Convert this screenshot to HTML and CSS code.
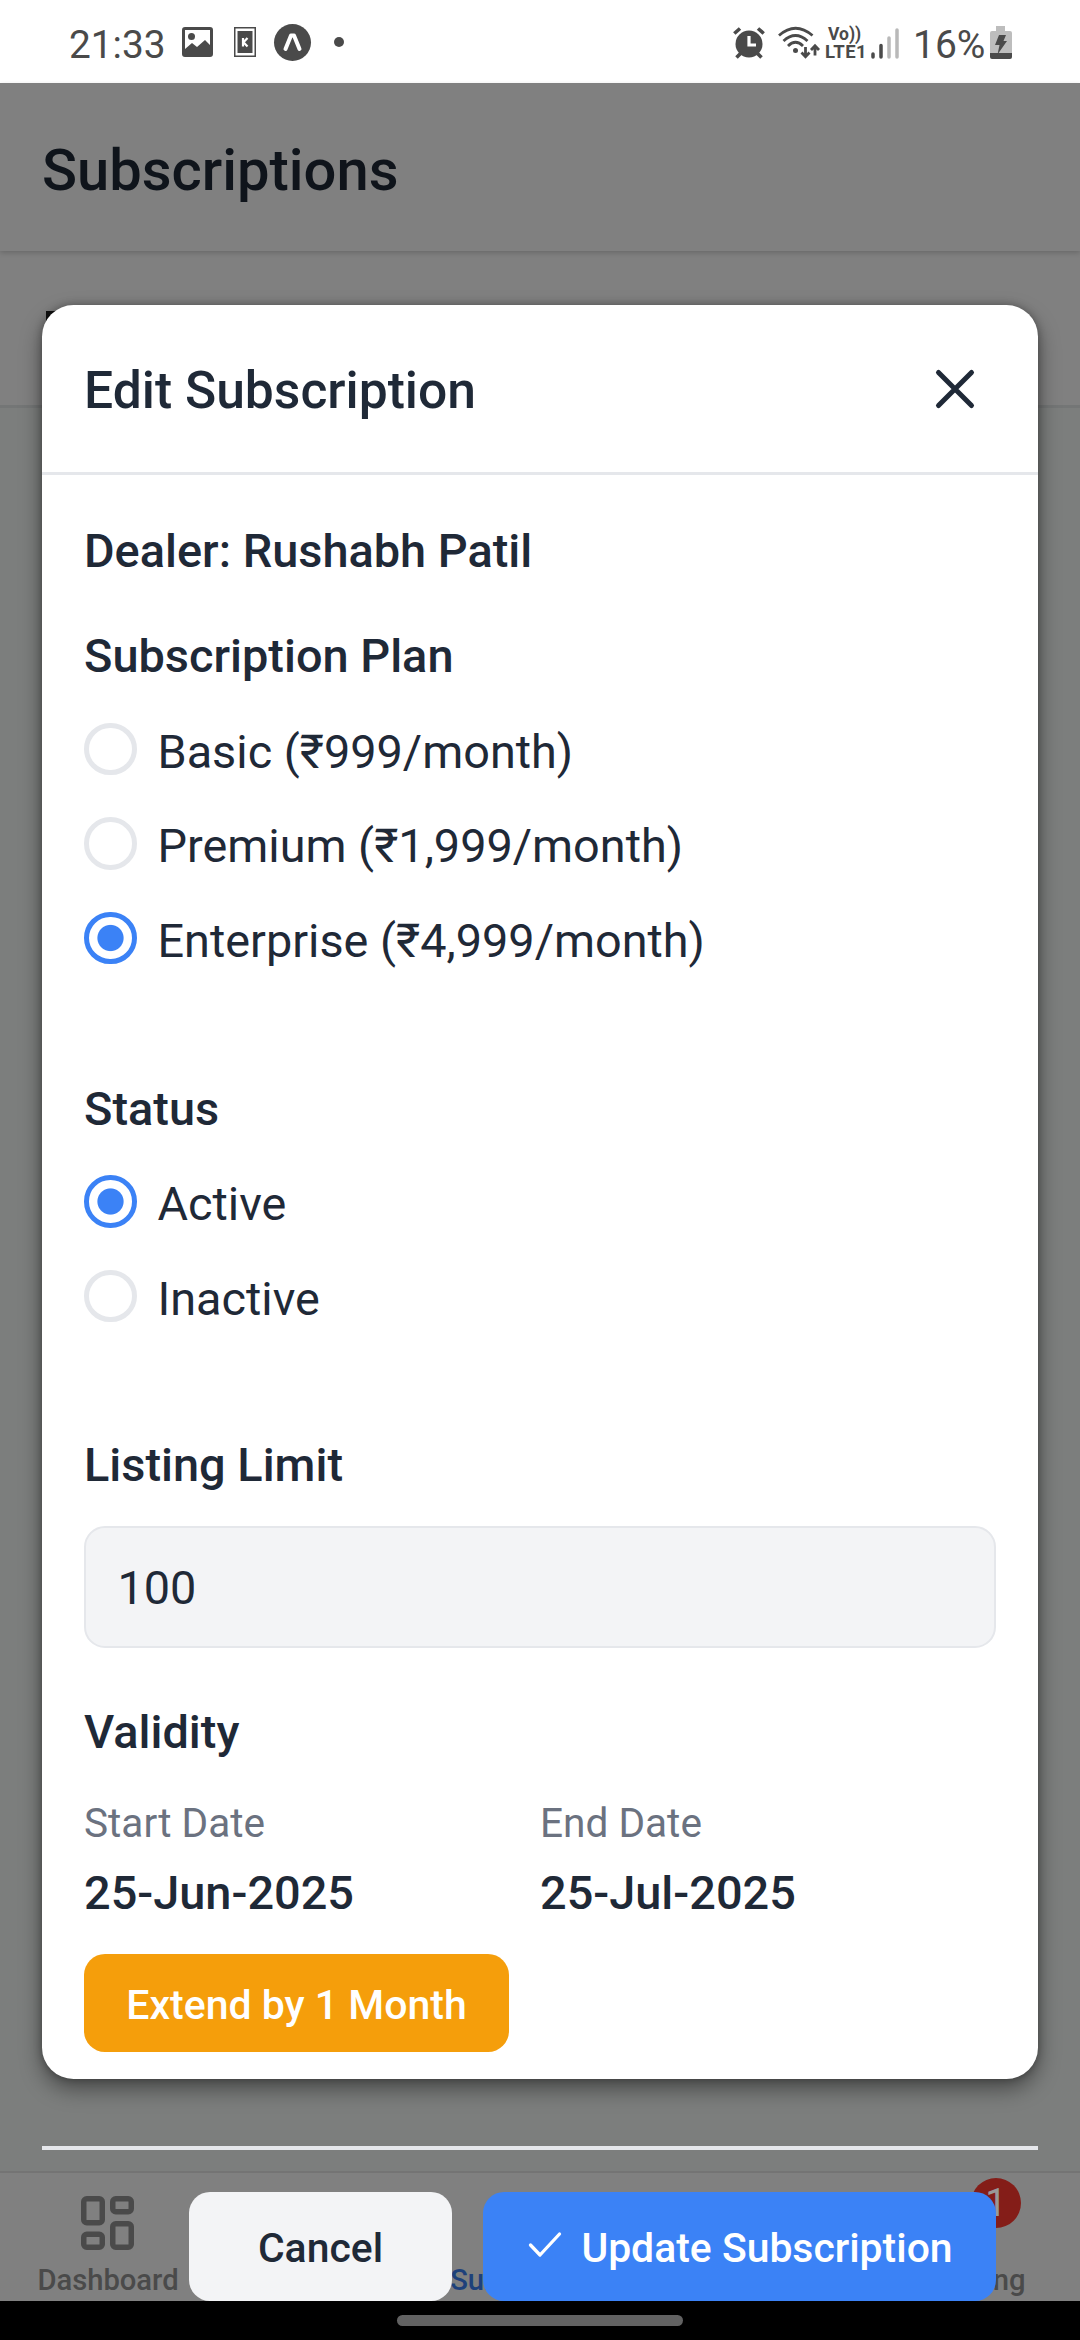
FILE: index.html
```html
<!DOCTYPE html>
<html lang="en">
<head>
<meta charset="utf-8">
<title>Subscriptions</title>
<link rel="stylesheet" href="styles.css">
</head>
<body>
<div class="screen">
  <header class="statusbar">
    <div class="status-left">
      <span class="clock">21:33</span>
      <svg class="ic-photo" viewBox="0 0 31 30"><path fill-rule="evenodd" d="M3 0h25a3 3 0 0 1 3 3v24a3 3 0 0 1-3 3H3a3 3 0 0 1-3-3V3a3 3 0 0 1 3-3zM3 3v19l7-6 5 4 8-7 5 5V3z"/><circle cx="9.500" cy="9.500" r="3.500"/></svg>
      <svg class="ic-card" viewBox="0 0 22 30"><path fill="none" stroke="#4a4a4a" stroke-width="1.500" d="M.75.75h20.500v28.500H.75z"/><path d="M3.500 4h15v22h-15z"/><path fill="none" stroke="#fff" stroke-width="2.200" d="M9 11v8.500M13.500 11l-4 4.300 4 4.200"/></svg>
      <svg class="ic-expo" viewBox="0 0 37 37"><circle cx="18.500" cy="18.500" r="18.500"/><path fill="none" stroke="#fff" stroke-width="4" stroke-linecap="round" stroke-linejoin="round" d="M11.500 25 17 11.500h3L25.500 25"/></svg>
      <span class="dot"></span>
    </div>
    <div class="status-right">
      <svg class="ic-alarm" viewBox="0 0 32 32"><circle cx="16" cy="17" r="13.500"/><path fill="none" stroke="#4a4a4a" stroke-width="3.600" d="M1.300 6.500 7 1.500M30.700 6.500 25 1.500M3.500 30.500l5-5M28.500 30.500l-5-5"/><path fill="none" stroke="#fff" stroke-width="3.200" d="M16 9v9h7"/></svg>
      <svg class="ic-wifi" viewBox="0 0 42 33"><g fill="none" stroke="#4a4a4a" stroke-width="2.800"><path d="M1 9.500Q17.500-5 34.500 9.500M5.500 15Q17.500 4 29.500 15M10 20Q17.500 12.500 25 20"/><path d="M27.500 21v9M23.500 26.500l4 4.200 4-4.200M37 29.500V20M33 24l4-4.200 4 4.200"/></g><circle cx="17.500" cy="24.500" r="2.500"/></svg>
      <div class="volte"><span class="vo">Vo))</span><span class="lte">LTE1</span></div>
      <svg class="ic-signal" viewBox="0 0 28 31"><path stroke="#4a4a4a" stroke-width="3.500" stroke-linecap="round" d="M2 26v3M10 17.500V29"/><path stroke="#b9b9b9" stroke-width="3.500" stroke-linecap="round" d="M18 10v19M26 2v27"/></svg>
      <span class="percent">16%</span>
      <svg class="ic-battery" viewBox="0 0 22 33"><path fill="#bdbdbd" d="M6 0h9v5h5a2 2 0 0 1 2 2v20H0V7a2 2 0 0 1 2-2h4z"/><path d="M0 27h22v4a2 2 0 0 1-2 2H2a2 2 0 0 1-2-2z"/><path d="M9 9h7l-2.500 6H17L7.500 28.500 9.500 19H5z"/></svg>
    </div>
  </header>

  <main class="page">
    <div class="page-header"><h1>Subscriptions</h1></div>
    <div class="page-tabs"><span class="tab-mark"></span></div>
    <div class="page-body"></div>
    <nav class="tabbar">
      <div class="tab"><svg class="ic-dash" viewBox="0 0 54 54"><g fill="none" stroke="#4a4a4a" stroke-width="5.500"><rect x="2.750" y="2.750" width="18.500" height="24" rx="3"/><rect x="31.750" y="2.750" width="18.500" height="13" rx="3"/><rect x="31.750" y="27.750" width="18.500" height="23.500" rx="3"/><rect x="2.750" y="38.250" width="18.500" height="13" rx="3"/></g></svg><span>Dashboard</span></div>
      <div class="tab"></div>
      <div class="tab active"><span>Subscriptions</span></div>
      <div class="tab"></div>
      <div class="tab"><b class="badge">1</b><span>Pending</span></div>
    </nav>
  </main>

  <section class="overlay">
    <div class="modal">
      <div class="modal-header">
        <h2>Edit Subscription</h2>
        <svg class="ic-close" viewBox="0 0 38 38"><path d="M2.500 2.500l33 33M35.500 2.500l-33 33"/></svg>
      </div>
      <div class="modal-body">
        <h3 class="dealer">Dealer: Rushabh Patil</h3>
        <h3 class="plan">Subscription Plan</h3>
        <div class="options">
          <div class="option"><i class="radio"></i><span>Basic (₹999/month)</span></div>
          <div class="option"><i class="radio"></i><span>Premium (₹1,999/month)</span></div>
          <div class="option"><i class="radio on"></i><span>Enterprise (₹4,999/month)</span></div>
        </div>
        <h3 class="status">Status</h3>
        <div class="options">
          <div class="option"><i class="radio on"></i><span>Active</span></div>
          <div class="option"><i class="radio"></i><span>Inactive</span></div>
        </div>
        <h3 class="limit">Listing Limit</h3>
        <div class="input">100</div>
        <h3 class="validity">Validity</h3>
        <div class="dates">
          <div><p class="label">Start Date</p><p class="date">25-Jun-2025</p></div>
          <div><p class="label">End Date</p><p class="date">25-Jul-2025</p></div>
        </div>
        <div class="extend">Extend by 1 Month</div>
      </div>
    </div>
    <div class="modal-footer">
      <div class="btn cancel">Cancel</div>
      <div class="btn update"><svg class="ic-check" viewBox="0 0 32 25"><path d="M1.500 13l9.500 10L30.500 2"/></svg><span>Update Subscription</span></div>
    </div>
  </section>
  <div class="gesture"><span></span></div>
</div>
</body>
</html>
```
FILE: styles.css
```css
* { box-sizing: border-box; }
body { margin: 0; background: #000; font-family: Roboto, "Noto Sans", sans-serif; color: #1f2937; }
h1, h2, h3, p { margin: 0; font-weight: 500; }
svg { display: block; flex: none; fill: #4a4a4a; overflow: visible; }
.screen { position: relative; width: 1080px; height: 2340px; overflow: hidden; display: flex; flex-direction: column; }

.statusbar { height: 83px; flex: none; background: #fff; display: flex; justify-content: space-between; padding: 0 68px 0 69px; color: #4a4a4a; }
.status-left, .status-right { display: flex; align-items: flex-start; }
.clock { font-size: 38.800px; line-height: 40px; margin-top: 25px; width: 113px; }
.ic-photo { width: 31px; height: 30px; margin-top: 27px; }
.ic-card { width: 22px; height: 30px; margin: 27px 18px 0 21px; }
.ic-expo { width: 37px; height: 37px; margin-top: 24px; }
.dot { width: 10px; height: 10px; border-radius: 50%; background: #4a4a4a; margin: 37px 0 0 23px; }
.ic-alarm { width: 32px; height: 32px; margin-top: 27px; }
.ic-wifi { width: 42px; height: 33px; margin: 26px 0 0 13px; }
.volte { display: flex; flex-direction: column; width: 40px; margin: 26px 0 0 5px; font-weight: 700; }
.vo { font-size: 17.500px; line-height: 17px; padding-left: 3px; white-space: nowrap; }
.lte { font-size: 18.500px; line-height: 18px; letter-spacing: .4px; }
.ic-signal { width: 28px; height: 31px; margin: 28px 0 0 6px; }
.percent { font-size: 39px; line-height: 40px; margin: 25px 0 0 14px; width: 77px; }
.ic-battery { width: 22px; height: 33px; margin-top: 26px; }

.page { height: 2218px; flex: none; background: #7c7e7d; display: flex; flex-direction: column; }
.page-header { position: relative; height: 168px; flex: none; padding: 53px 42px 0; background: #808080; box-shadow: 0 2px 5px rgba(0, 0, 0, .18); }
.page-header h1 { font-size: 57.900px; line-height: 68px; color: #0f141b; }
.page-tabs { height: 157px; flex: none; background: #808080; border-bottom: 3px solid #747676; padding: 60px 46px; }
.tab-mark { display: block; width: 20px; height: 30px; background: #111; }
.page-body { flex: 1; }
.tabbar { height: 130px; flex: none; display: grid; grid-template-columns: repeat(5, 1fr); background: #808080; border-top: 2px solid #747474; }
.tab { position: relative; display: flex; flex-direction: column; justify-content: flex-end; align-items: center; padding-bottom: 4px; font-size: 29.200px; line-height: 34px; font-weight: 500; color: #4a4a4a; }
.tab.active { color: #1e417b; }
.ic-dash { width: 54px; height: 54px; margin-bottom: 13px; }
.badge { position: absolute; top: 5px; left: 107px; width: 50px; height: 50px; border-radius: 50%; background: #841d18; color: #999; font-size: 38px; line-height: 50px; font-weight: 400; text-align: center; }

.overlay { position: absolute; left: 42px; top: 305px; width: 996px; height: 1996px; display: flex; flex-direction: column; }
.modal { height: 1774px; flex: none; background: #fff; border-radius: 31.500px; box-shadow: 0 10px 22px rgba(0, 0, 0, .42), 0 0 9px rgba(0, 0, 0, .3); }
.modal-header { height: 170px; display: flex; justify-content: space-between; padding: 0 64px 0 42px; border-bottom: 3px solid #e5e7eb; }
.modal-header h2 { font-size: 51.600px; line-height: 60px; margin-top: 56px; }
.ic-close { width: 38px; height: 38px; margin-top: 65px; fill: none; stroke: #1f2937; stroke-width: 5; stroke-linecap: round; }
.modal-body { padding: 49px 42px 0; }
h3 { font-size: 46.900px; line-height: 54px; }
.plan { margin: 51px 0 39.500px; }
.options { display: flex; flex-direction: column; gap: 42px; }
.option { display: flex; gap: 21px; height: 52.500px; font-size: 46.800px; line-height: 54px; }
.option span { margin-top: 2px; white-space: nowrap; }
.radio { flex: none; width: 52.500px; height: 52.500px; border-radius: 50%; border: 5.250px solid #e5e7eb; }
.radio.on { border-color: #3b82f6; background: radial-gradient(circle, #3b82f6 12.600px, transparent 13.600px); }
.status { margin: 117.500px 0 39.500px; }
.limit { margin: 115.500px 0 34.500px; }
.input { height: 122px; border: 2.600px solid #e5e7eb; border-radius: 21px; background: #f3f4f6; padding: 32.500px 31.500px 0; font-size: 46.800px; line-height: 54px; }
.validity { margin: 56.500px 0 40.500px; }
.dates { display: grid; grid-template-columns: 1fr 1fr; }
.label { font-size: 40.600px; line-height: 48px; font-weight: 400; color: #6b7280; margin-bottom: 19px; }
.date { font-size: 46.900px; line-height: 54px; }
.extend { width: 425px; height: 98px; margin-top: 34px; border-radius: 21px; background: #f59e0b; color: #fff; font-size: 41px; line-height: 48px; padding: 27px 0 0; text-align: center; font-weight: 500; }
.modal-footer { margin-top: 67px; height: 155px; border-top: 4px solid #e5e7eb; display: flex; justify-content: flex-end; align-items: flex-end; gap: 31px; padding-right: 42px; }
.btn { height: 109px; border-radius: 21px; font-size: 40.900px; line-height: 48px; font-weight: 500; display: flex; align-items: center; justify-content: center; padding-top: 3px; }
.cancel { width: 263px; background: #f3f4f6; }
.update { width: 513px; background: #3b82f6; color: #fff; gap: 20px; padding-left: 3px; }
.ic-check { width: 32px; height: 25px; margin-bottom: 7px; fill: none; stroke: #fff; stroke-width: 3.300; stroke-linecap: round; stroke-linejoin: round; }
.gesture { height: 39px; flex: none; background: #000; padding: 14px 0 0 397px; }
.gesture span { display: block; width: 286px; height: 11px; border-radius: 6px; background: #626262; }
```
